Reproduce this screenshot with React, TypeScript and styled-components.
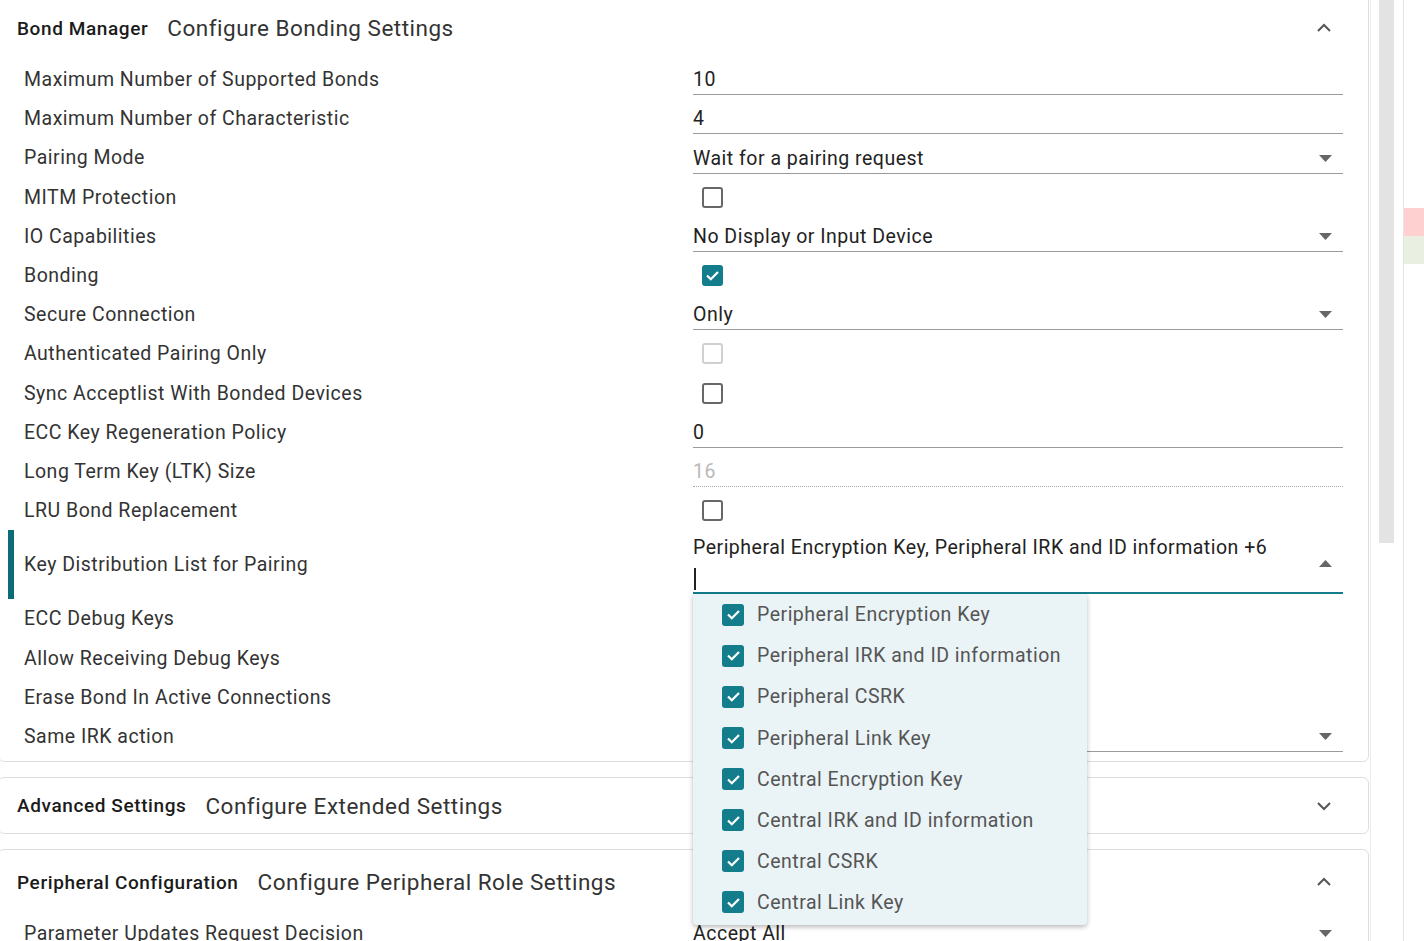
import React from 'react';
import styled, { createGlobalStyle } from 'styled-components';

const TEAL = '#137d8b';

const GlobalStyle = createGlobalStyle`
  html, body { margin: 0; padding: 0; background: #fff; }
  body {
    font-family: Roboto, 'Noto Sans', Arial, sans-serif;
    color: #2c2c2c;
    overflow: hidden;
  }
`;

const Page = styled.div`
  display: flex;
  width: 1424px;
  height: 941px;
  overflow: hidden;
`;

const Main = styled.div`
  width: 1371px;
  flex: none;
  border-right: 1px solid #ececec;
  box-sizing: border-box;
  overflow: hidden;
`;

const Stack = styled.div`
  display: flex;
  flex-direction: column;
  gap: 15px;
  margin: -5px 1px 0 -2px;
`;

const Card = styled.section`
  border: 1px solid #dedede;
  border-radius: 6px;
  background: #fff;
`;

const CardHeader = styled.header<{ $collapsed?: boolean }>`
  display: flex;
  align-items: center;
  height: ${(p) => (p.$collapsed ? 55 : 64)}px;
  padding: 0 36px 0 18px;
`;

const Title = styled.span`
  font-size: 19px;
  font-weight: 500;
  letter-spacing: 0.6px;
  color: #1b1b1b;
`;

const Subtitle = styled.span`
  font-size: 22.5px;
  letter-spacing: 0.5px;
  color: #333;
  margin-left: 19px;
`;

const Chevron = styled.svg`
  margin-left: auto;
  width: 16px;
  height: 12px;
`;

const Body = styled.div`
  padding-bottom: 5px;
`;

const Row = styled.div<{ $tall?: boolean; $active?: boolean }>`
  display: grid;
  grid-template-columns: 669px 650px;
  align-items: center;
  height: ${(p) => (p.$tall ? 69 : 39.2)}px;
  padding-left: 25px;
  position: relative;
  &::before {
    content: '';
    display: ${(p) => (p.$active ? 'block' : 'none')};
    position: absolute;
    left: 9px;
    top: 0;
    bottom: 0;
    width: 6px;
    background: #0b6b78;
  }
`;

const Label = styled.span`
  font-size: 19.5px;
  letter-spacing: 0.5px;
  color: #333;
`;

const Field = styled.div<{ $disabled?: boolean }>`
  align-self: end;
  margin-bottom: 4px;
  height: 28px;
  display: flex;
  align-items: center;
  padding-bottom: 2px;
  box-sizing: border-box;
  border-bottom: ${(p) => (p.$disabled ? '1.5px dotted #a9a9a9' : '1.5px solid #9b9b9b')};
  font-size: 19.5px;
  letter-spacing: 0.5px;
  color: ${(p) => (p.$disabled ? '#b9b9b9' : '#222')};
`;

const Caret = styled.svg`
  margin-left: auto;
  margin-right: 11px;
  width: 13px;
  height: 7px;
`;

const Box = styled.span<{ $checked?: boolean; $disabled?: boolean }>`
  width: 21px;
  height: 21px;
  box-sizing: border-box;
  border-radius: 3px;
  display: inline-flex;
  align-items: center;
  justify-content: center;
  flex: none;
  border: 2px solid ${(p) => (p.$checked ? TEAL : p.$disabled ? '#d0d0d0' : '#686868')};
  background: ${(p) => (p.$checked ? TEAL : '#fff')};
`;

const CheckCell = styled.div`
  display: flex;
  align-items: center;
  padding-left: 9px;
`;

const Multi = styled.div`
  align-self: end;
  margin-bottom: 5px;
  position: relative;
  display: flex;
  align-items: center;
  border-bottom: 2px solid ${TEAL};
  height: 59px;
  box-sizing: border-box;
`;

const MultiText = styled.div`
  display: flex;
  flex-direction: column;
  font-size: 19.5px;
  letter-spacing: 0.5px;
  color: #222;
  line-height: 26px;
  align-self: stretch;
`;

const Cursor = styled.span`
  width: 1.5px;
  height: 22px;
  background: #222;
  margin: 7px 0 0 1px;
`;

const Menu = styled.div`
  position: absolute;
  top: 100%;
  left: 0;
  width: 394px;
  margin-top: 2px;
  background: #eaf3f5;
  box-shadow: 0 2px 5px rgba(0, 0, 0, 0.28);
  border-radius: 0 0 4px 4px;
  z-index: 10;
  padding-bottom: 2px;
`;

const MenuItem = styled.div`
  display: flex;
  align-items: center;
  gap: 13px;
  height: 41.1px;
  padding-left: 29px;
  font-size: 19.5px;
  letter-spacing: 0.5px;
  color: #555;
  ${Box} {
    width: 22px;
    height: 22px;
  }
`;

const Scrollbar = styled.div`
  width: 33px;
  flex: none;
  border-right: 1px solid #e4e4e4;
  box-sizing: border-box;
  padding-left: 8px;
`;

const Thumb = styled.div`
  width: 15px;
  height: 543px;
  background: #e3e3e3;
`;

const Ruler = styled.div`
  flex: 1;
  padding-top: 208px;
`;

const Mark = styled.div<{ $color: string }>`
  height: 28px;
  background: ${(p) => p.$color};
`;

const Check = () => (
  <svg width="15" height="13" viewBox="0 0 15 13">
    <polyline points="2,6.5 5.8,10.3 13,3" fill="none" stroke="#fff" strokeWidth="2.2" />
  </svg>
);

const CheckBox = ({ checked, disabled }: { checked?: boolean; disabled?: boolean }) => (
  <Box $checked={checked} $disabled={disabled}>{checked && <Check />}</Box>
);

const ChevronIcon = ({ up }: { up?: boolean }) => (
  <Chevron viewBox="0 0 16 12">
    <polyline
      points={up ? '2,9 8,3 14,9' : '2,3 8,9 14,3'}
      fill="none"
      stroke="#555"
      strokeWidth="2"
    />
  </Chevron>
);

const CaretIcon = ({ up }: { up?: boolean }) => (
  <Caret viewBox="0 0 13 7">
    <polygon points={up ? '0,7 13,7 6.5,0' : '0,0 13,0 6.5,7'} fill="#666" />
  </Caret>
);

type Setting =
  | { label: string; kind: 'text'; value: string; disabled?: boolean }
  | { label: string; kind: 'select'; value: string }
  | { label: string; kind: 'check'; checked?: boolean; disabled?: boolean }
  | { label: string; kind: 'multi'; value: string };

const bondSettings: Setting[] = [
  { label: 'Maximum Number of Supported Bonds', kind: 'text', value: '10' },
  { label: 'Maximum Number of Characteristic', kind: 'text', value: '4' },
  { label: 'Pairing Mode', kind: 'select', value: 'Wait for a pairing request' },
  { label: 'MITM Protection', kind: 'check' },
  { label: 'IO Capabilities', kind: 'select', value: 'No Display or Input Device' },
  { label: 'Bonding', kind: 'check', checked: true },
  { label: 'Secure Connection', kind: 'select', value: 'Only' },
  { label: 'Authenticated Pairing Only', kind: 'check', disabled: true },
  { label: 'Sync Acceptlist With Bonded Devices', kind: 'check' },
  { label: 'ECC Key Regeneration Policy', kind: 'text', value: '0' },
  { label: 'Long Term Key (LTK) Size', kind: 'text', value: '16', disabled: true },
  { label: 'LRU Bond Replacement', kind: 'check' },
  {
    label: 'Key Distribution List for Pairing',
    kind: 'multi',
    value: 'Peripheral Encryption Key, Peripheral IRK and ID information +6',
  },
  { label: 'ECC Debug Keys', kind: 'check' },
  { label: 'Allow Receiving Debug Keys', kind: 'check' },
  { label: 'Erase Bond In Active Connections', kind: 'check' },
  { label: 'Same IRK action', kind: 'select', value: '' },
];

const keyOptions = [
  'Peripheral Encryption Key',
  'Peripheral IRK and ID information',
  'Peripheral CSRK',
  'Peripheral Link Key',
  'Central Encryption Key',
  'Central IRK and ID information',
  'Central CSRK',
  'Central Link Key',
];

function SettingRow({ s }: { s: Setting }) {
  if (s.kind === 'multi') {
    return (
      <Row $tall $active>
        <Label>{s.label}</Label>
        <Multi>
          <MultiText>
            {s.value}
            <Cursor />
          </MultiText>
          <CaretIcon up />
          <Menu>
            {keyOptions.map((o) => (
              <MenuItem key={o}>
                <CheckBox checked />
                {o}
              </MenuItem>
            ))}
          </Menu>
        </Multi>
      </Row>
    );
  }
  return (
    <Row>
      <Label>{s.label}</Label>
      {s.kind === 'text' && <Field $disabled={s.disabled}>{s.value}</Field>}
      {s.kind === 'select' && (
        <Field>
          {s.value}
          <CaretIcon />
        </Field>
      )}
      {s.kind === 'check' && (
        <CheckCell>
          <CheckBox checked={s.checked} disabled={s.disabled} />
        </CheckCell>
      )}
    </Row>
  );
}

export default function App() {
  return (
    <>
      <GlobalStyle />
      <Page>
        <Main>
          <Stack>
            <Card>
              <CardHeader>
                <Title>Bond Manager</Title>
                <Subtitle>Configure Bonding Settings</Subtitle>
                <ChevronIcon up />
              </CardHeader>
              <Body>
                {bondSettings.map((s) => (
                  <SettingRow key={s.label} s={s} />
                ))}
              </Body>
            </Card>
            <Card>
              <CardHeader $collapsed>
                <Title>Advanced Settings</Title>
                <Subtitle>Configure Extended Settings</Subtitle>
                <ChevronIcon />
              </CardHeader>
            </Card>
            <Card>
              <CardHeader>
                <Title>Peripheral Configuration</Title>
                <Subtitle>Configure Peripheral Role Settings</Subtitle>
                <ChevronIcon up />
              </CardHeader>
              <Body>
                <SettingRow
                  s={{ label: 'Parameter Updates Request Decision', kind: 'select', value: 'Accept All' }}
                />
              </Body>
            </Card>
          </Stack>
        </Main>
        <Scrollbar>
          <Thumb />
        </Scrollbar>
        <Ruler>
          <Mark $color="#ffd0d0" />
          <Mark $color="#e9f0e1" />
        </Ruler>
      </Page>
    </>
  );
}
